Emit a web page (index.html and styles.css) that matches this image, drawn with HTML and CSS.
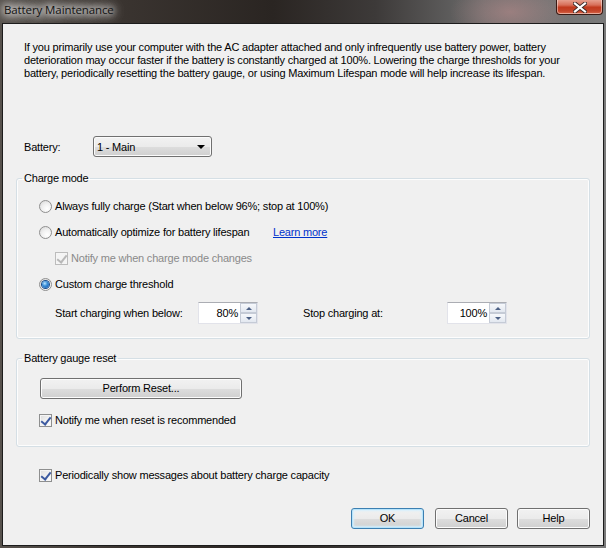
FILE: index.html
```html
<!DOCTYPE html>
<html>
<head>
<meta charset="utf-8">
<link rel="stylesheet" href="styles.css">
</head>
<body>
<div class="window">
  <div class="titlebar">
    <span class="title">Battery Maintenance</span>
    <div class="close">
      <svg width="14" height="11" viewBox="0 0 14 11">
        <path d="M2 1.5 L12 9.5 M12 1.5 L2 9.5" stroke="#3a2a28" stroke-width="4" stroke-linecap="square"/>
        <path d="M2 1.5 L12 9.5 M12 1.5 L2 9.5" stroke="#ffffff" stroke-width="2.2" stroke-linecap="square"/>
      </svg>
    </div>
  </div>
  <div class="client">
    <p class="intro">If you primarily use your computer with the AC adapter attached and only infrequently use battery power, battery deterioration may occur faster if the battery is constantly charged at 100%. Lowering the charge thresholds for your battery, periodically resetting the battery gauge, or using Maximum Lifespan mode will help increase its lifespan.</p>

    <div class="battery-row">
      <span class="battery-label">Battery:</span>
      <div class="combo"><span class="combo-text">1 - Main</span><span class="combo-arrow"></span></div>
    </div>

    <fieldset class="group charge">
      <legend>Charge mode</legend>
      <div class="group-body">
        <div class="opt first"><span class="radio"></span><span>Always fully charge (Start when below 96%; stop at 100%)</span></div>
        <div class="opt"><span class="radio"></span><span class="opt-fixed">Automatically optimize for battery lifespan</span><a class="link">Learn more</a></div>
        <div class="opt sub disabled"><span class="check checked dis"></span><span>Notify me when charge mode changes</span></div>
        <div class="opt"><span class="radio on"></span><span>Custom charge threshold</span></div>
        <div class="spin-row">
          <span class="spin-label">Start charging when below:</span>
          <div class="spin"><span class="spin-field">80%</span><span class="spin-btns"><span class="sb up"></span><span class="sb down"></span></span></div>
          <span class="spin-label second">Stop charging at:</span>
          <div class="spin"><span class="spin-field">100%</span><span class="spin-btns"><span class="sb up"></span><span class="sb down"></span></span></div>
        </div>
      </div>
    </fieldset>

    <fieldset class="group gauge">
      <legend>Battery gauge reset</legend>
      <div class="group-body">
        <div class="btn wide">Perform Reset...</div>
        <div class="opt reset-row"><span class="check checked"></span><span>Notify me when reset is recommended</span></div>
      </div>
    </fieldset>

    <div class="opt periodic"><span class="check checked"></span><span>Periodically show messages about battery charge capacity</span></div>

    <div class="buttons">
      <div class="btn default">OK</div>
      <div class="btn cancel">Cancel</div>
      <div class="btn">Help</div>
    </div>
  </div>
</div>
</body>
</html>
```
FILE: styles.css
```css
* { box-sizing: border-box; }
html, body { margin: 0; padding: 0; }
body {
  width: 606px;
  height: 548px;
  overflow: hidden;
  font-family: "Liberation Sans", Arial, sans-serif;
  font-size: 11px;
  letter-spacing: -0.2px;
  color: #000;
}
.window {
  width: 606px;
  height: 548px;
  display: flex;
  flex-direction: column;
  background:
    radial-gradient(ellipse 60px 30px at 510px 12px, rgba(190,140,140,0.55), rgba(190,140,140,0) 100%),
    linear-gradient(90deg, #57524d 0%, #3a3430 20%, #2a2522 45%, #3d3a39 62%, #6c6c6c 80%, #7a7a7a 100%);
}
.titlebar {
  height: 23px;
  flex: none;
  display: flex;
  align-items: flex-start;
  justify-content: space-between;
}
.title {
  margin: 3px 0 0 4px;
  font-family: "Open Sans", "Noto Sans", sans-serif;
  font-size: 11.5px;
  line-height: 14px;
  color: #111;
  padding: 0 4px 0 0;
  text-shadow: 0 0 6px #fff, 0 0 10px #fff, 0 0 14px #fff, 0 0 14px #fff;
  letter-spacing: -0.1px;
}
.close {
  margin-right: 3px;
  width: 47px;
  height: 16px;
  margin-top: -1px;
  border: 1px solid #3a1a14;
  border-top: none;
  border-radius: 0 0 4px 4px;
  background: linear-gradient(180deg, #e9a898 0%, #d8705a 40%, #c23a1e 55%, #c4452a 80%, #d86a4c 100%);
  box-shadow: inset 0 0 0 1px rgba(255,255,255,0.45);
  display: flex;
  align-items: center;
  justify-content: center;
}
.close svg { display: block; margin-top: 1px; }

.client {
  flex: 1;
  margin: 0 2px 2px 2px;
  border: 1px solid #1c1c1c;
  background: #f0f0f0;
  padding: 17px 13px 0 13px;
  display: flex;
  flex-direction: column;
}
.intro {
  margin: 0 0 0 8px;
  line-height: 13px;
  width: 560px;
}
.battery-row {
  margin-top: 56px;
  height: 21px;
  display: flex;
  align-items: center;
}
.battery-label { width: 69px; margin-left: 8px; }
.combo {
  width: 119px;
  height: 21px;
  border: 1px solid #707070;
  border-radius: 3px;
  background: linear-gradient(180deg, #f2f2f2 0%, #ebebeb 50%, #dddddd 51%, #cfcfcf 100%);
  box-shadow: inset 0 0 0 1px #fbfbfb;
  display: flex;
  align-items: center;
  justify-content: space-between;
  padding: 0 6px 0 3px;
}
.combo-arrow {
  width: 0; height: 0;
  border-left: 4px solid transparent;
  border-right: 4px solid transparent;
  border-top: 4px solid #000;
}

.group {
  margin: 0;
  padding: 0;
  border: 1px solid #d5dfe5;
  border-radius: 3px;
  box-shadow: inset 0 0 0 1px #fdfdfd;
  min-width: 0;
}
.group legend {
  margin-left: 5px;
  padding: 0 2px;
  line-height: 13px;
}
.charge { margin-top: 15px; }
.charge .group-body { padding: 15px 0 14px 22px; }
.gauge { margin-top: 13px; }
.gauge .group-body { padding: 13px 0 19px 23px; }
.opt {
  display: flex;
  align-items: center;
  height: 13px;
  line-height: 13px;
  margin-top: 13px;
}
.opt.first { margin-top: 0; }
.opt.sub { margin-top: 13px; margin-left: 16px; }
.opt.disabled { color: #8a8a8a; }
.opt-fixed { width: 218px; }
.link { color: #0033cc; text-decoration: underline; }

.radio {
  width: 13px; height: 13px;
  border-radius: 50%;
  border: 1px solid #8f8f8f;
  background: radial-gradient(circle at 65% 70%, #ffffff 0%, #f1f1f1 45%, #d4d4d4 100%);
  margin-right: 3px;
  flex: none;
  position: relative;
}
.radio.on::after {
  content: "";
  position: absolute;
  left: 2px; top: 2px;
  width: 7px; height: 7px;
  border-radius: 50%;
  background: radial-gradient(circle at 40% 35%, #bfe6ff 0%, #3b8fd8 40%, #0b4ea6 100%);
  box-shadow: 0 0 0 1px #1b4c8a;
}
.check {
  width: 13px; height: 13px;
  border: 1px solid #8e8f8f;
  background: linear-gradient(135deg, #dcdcdc 0%, #f4f4f4 60%, #ffffff 100%);
  box-shadow: inset 0 0 0 1px #f5f5f5;
  margin-right: 3px;
  flex: none;
  position: relative;
}
.check.checked::after {
  content: "";
  position: absolute;
  left: 3px; top: 0px;
  width: 4px; height: 8px;
  border-right: 2px solid #3c5aa0;
  border-bottom: 2px solid #3c5aa0;
  transform: rotate(38deg);
}
.check.dis { border-color: #bcbcbc; background: #f4f4f4; }
.check.dis.checked::after { border-color: #b8b8b8; }

.spin-row {
  display: flex;
  align-items: center;
  margin-top: 11px;
  margin-left: 16px;
  height: 22px;
}
.spin-label { width: 143px; }
.spin-label.second { margin-left: 45px; width: 144px; }
.spin {
  width: 60px; height: 22px;
  display: flex;
  background: #fff;
  border: 1px solid #e2e3ea;
  border-top-color: #abadb3;
}
.spin-field {
  flex: 1;
  text-align: right;
  padding-right: 2px;
  line-height: 20px;
}
.spin-btns {
  width: 17px;
  display: flex;
  flex-direction: column;
}
.sb {
  flex: 1;
  border: 1px solid #c5cbd6;
  background: linear-gradient(180deg, #f6f8fb 0%, #e3e8f0 100%);
  display: flex;
  align-items: center;
  justify-content: center;
}
.sb.up::after {
  content: "";
  border-left: 3px solid transparent;
  border-right: 3px solid transparent;
  border-bottom: 3px solid #4d6185;
}
.sb.down::after {
  content: "";
  border-left: 3px solid transparent;
  border-right: 3px solid transparent;
  border-top: 3px solid #4d6185;
}

.btn {
  height: 21px;
  width: 73px;
  border: 1px solid #707070;
  border-radius: 3px;
  background: linear-gradient(180deg, #f2f2f2 0%, #ebebeb 50%, #dddddd 51%, #cfcfcf 100%);
  box-shadow: inset 0 0 0 1px #fcfcfc;
  display: flex;
  align-items: center;
  justify-content: center;
  line-height: 13px;
}
.btn.wide { width: 202px; }
.reset-row { margin-top: 15px; margin-left: -1px; }
.periodic { margin-top: 22px; margin-left: 23px; }
.buttons {
  margin-top: 26px;
  display: flex;
  justify-content: flex-end;
}
.btn.default {
  border-color: #3c7fb1;
  box-shadow: inset 0 0 0 1px #b8e4fb, inset 0 0 2px 2px #d6effc;
  margin-right: 11px;
}
.btn.cancel { margin-right: 9px; }
```
